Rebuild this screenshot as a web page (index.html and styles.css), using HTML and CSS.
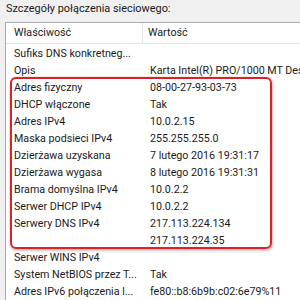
FILE: index.html
```html
<!DOCTYPE html>
<html lang="pl">
<head>
<meta charset="utf-8">
<link rel="stylesheet" href="styles.css">
</head>
<body>
<div class="title">Szczegóły połączenia sieciowego:</div>
<div class="list">
  <div class="head">
    <div class="hcell c1">Właściwość</div>
    <div class="hcell c2">Wartość</div>
  </div>
  <div class="rows">
    <div class="row"><span class="k">Sufiks DNS konkretneg...</span><span class="v"></span></div>
    <div class="row"><span class="k">Opis</span><span class="v">Karta Intel(R) PRO/1000 MT Desktop</span></div>
    <div class="row"><span class="k">Adres fizyczny</span><span class="v">08-00-27-93-03-73</span></div>
    <div class="row"><span class="k">DHCP włączone</span><span class="v">Tak</span></div>
    <div class="row"><span class="k">Adres IPv4</span><span class="v">10.0.2.15</span></div>
    <div class="row"><span class="k">Maska podsieci IPv4</span><span class="v">255.255.255.0</span></div>
    <div class="row"><span class="k">Dzierżawa uzyskana</span><span class="v">7 lutego 2016 19:31:17</span></div>
    <div class="row"><span class="k">Dzierżawa wygasa</span><span class="v">8 lutego 2016 19:31:31</span></div>
    <div class="row"><span class="k">Brama domyślna IPv4</span><span class="v">10.0.2.2</span></div>
    <div class="row"><span class="k">Serwer DHCP IPv4</span><span class="v">10.0.2.2</span></div>
    <div class="row"><span class="k">Serwery DNS IPv4</span><span class="v">217.113.224.134</span></div>
    <div class="row"><span class="k"></span><span class="v">217.113.224.35</span></div>
    <div class="row"><span class="k">Serwer WINS IPv4</span><span class="v"></span></div>
    <div class="row"><span class="k">System NetBIOS przez T...</span><span class="v">Tak</span></div>
    <div class="row"><span class="k">Adres IPv6 połączenia l...</span><span class="v">fe80::b8:6b9b:c02:6e79%11</span></div>
  </div>
  <div class="highlight"></div>
</div>
</body>
</html>
```
FILE: styles.css
```css
html, body {
  margin: 0;
  padding: 0;
  background: #f0f0f0;
  overflow: hidden;
}
body {
  width: 300px;
  height: 300px;
  font-family: Roboto, "Noto Sans", sans-serif;
  font-size: 10.7px;
  color: #1a1a1a;
}
.title {
  padding-left: 6px;
  height: 22px;
  line-height: 17px;
  font-size: 10.9px;
  white-space: nowrap;
}
.list {
  position: relative;
  margin-left: 5px;
  width: 400px;
  height: 300px;
  background: #fff;
  border: 1px solid #a9abb0;
}
.head {
  display: flex;
  height: 20px;
  border-bottom: 1px solid #e5e5e5;
}
.hcell {
  line-height: 20px;
  white-space: nowrap;
}
.c1 {
  width: 128px;
  padding-left: 8px;
  border-right: 1px solid #e5e5e5;
}
.c2 {
  padding-left: 5px;
}
.rows {
  padding-top: 1px;
}
.row {
  display: flex;
  height: 17px;
  line-height: 17px;
  white-space: nowrap;
}
.k {
  width: 128px;
  margin-right: 8px;
  padding-left: 8px;
  flex: none;
  overflow: hidden;
}
.highlight {
  position: absolute;
  left: 4px;
  top: 54px;
  width: 258px;
  height: 168px;
  border: 2px solid #d8232a;
  border-radius: 6px;
  box-shadow: 1px 2px 3px rgba(0, 0, 0, 0.22), 0 0 2px rgba(216, 35, 42, 0.35);
}
```
